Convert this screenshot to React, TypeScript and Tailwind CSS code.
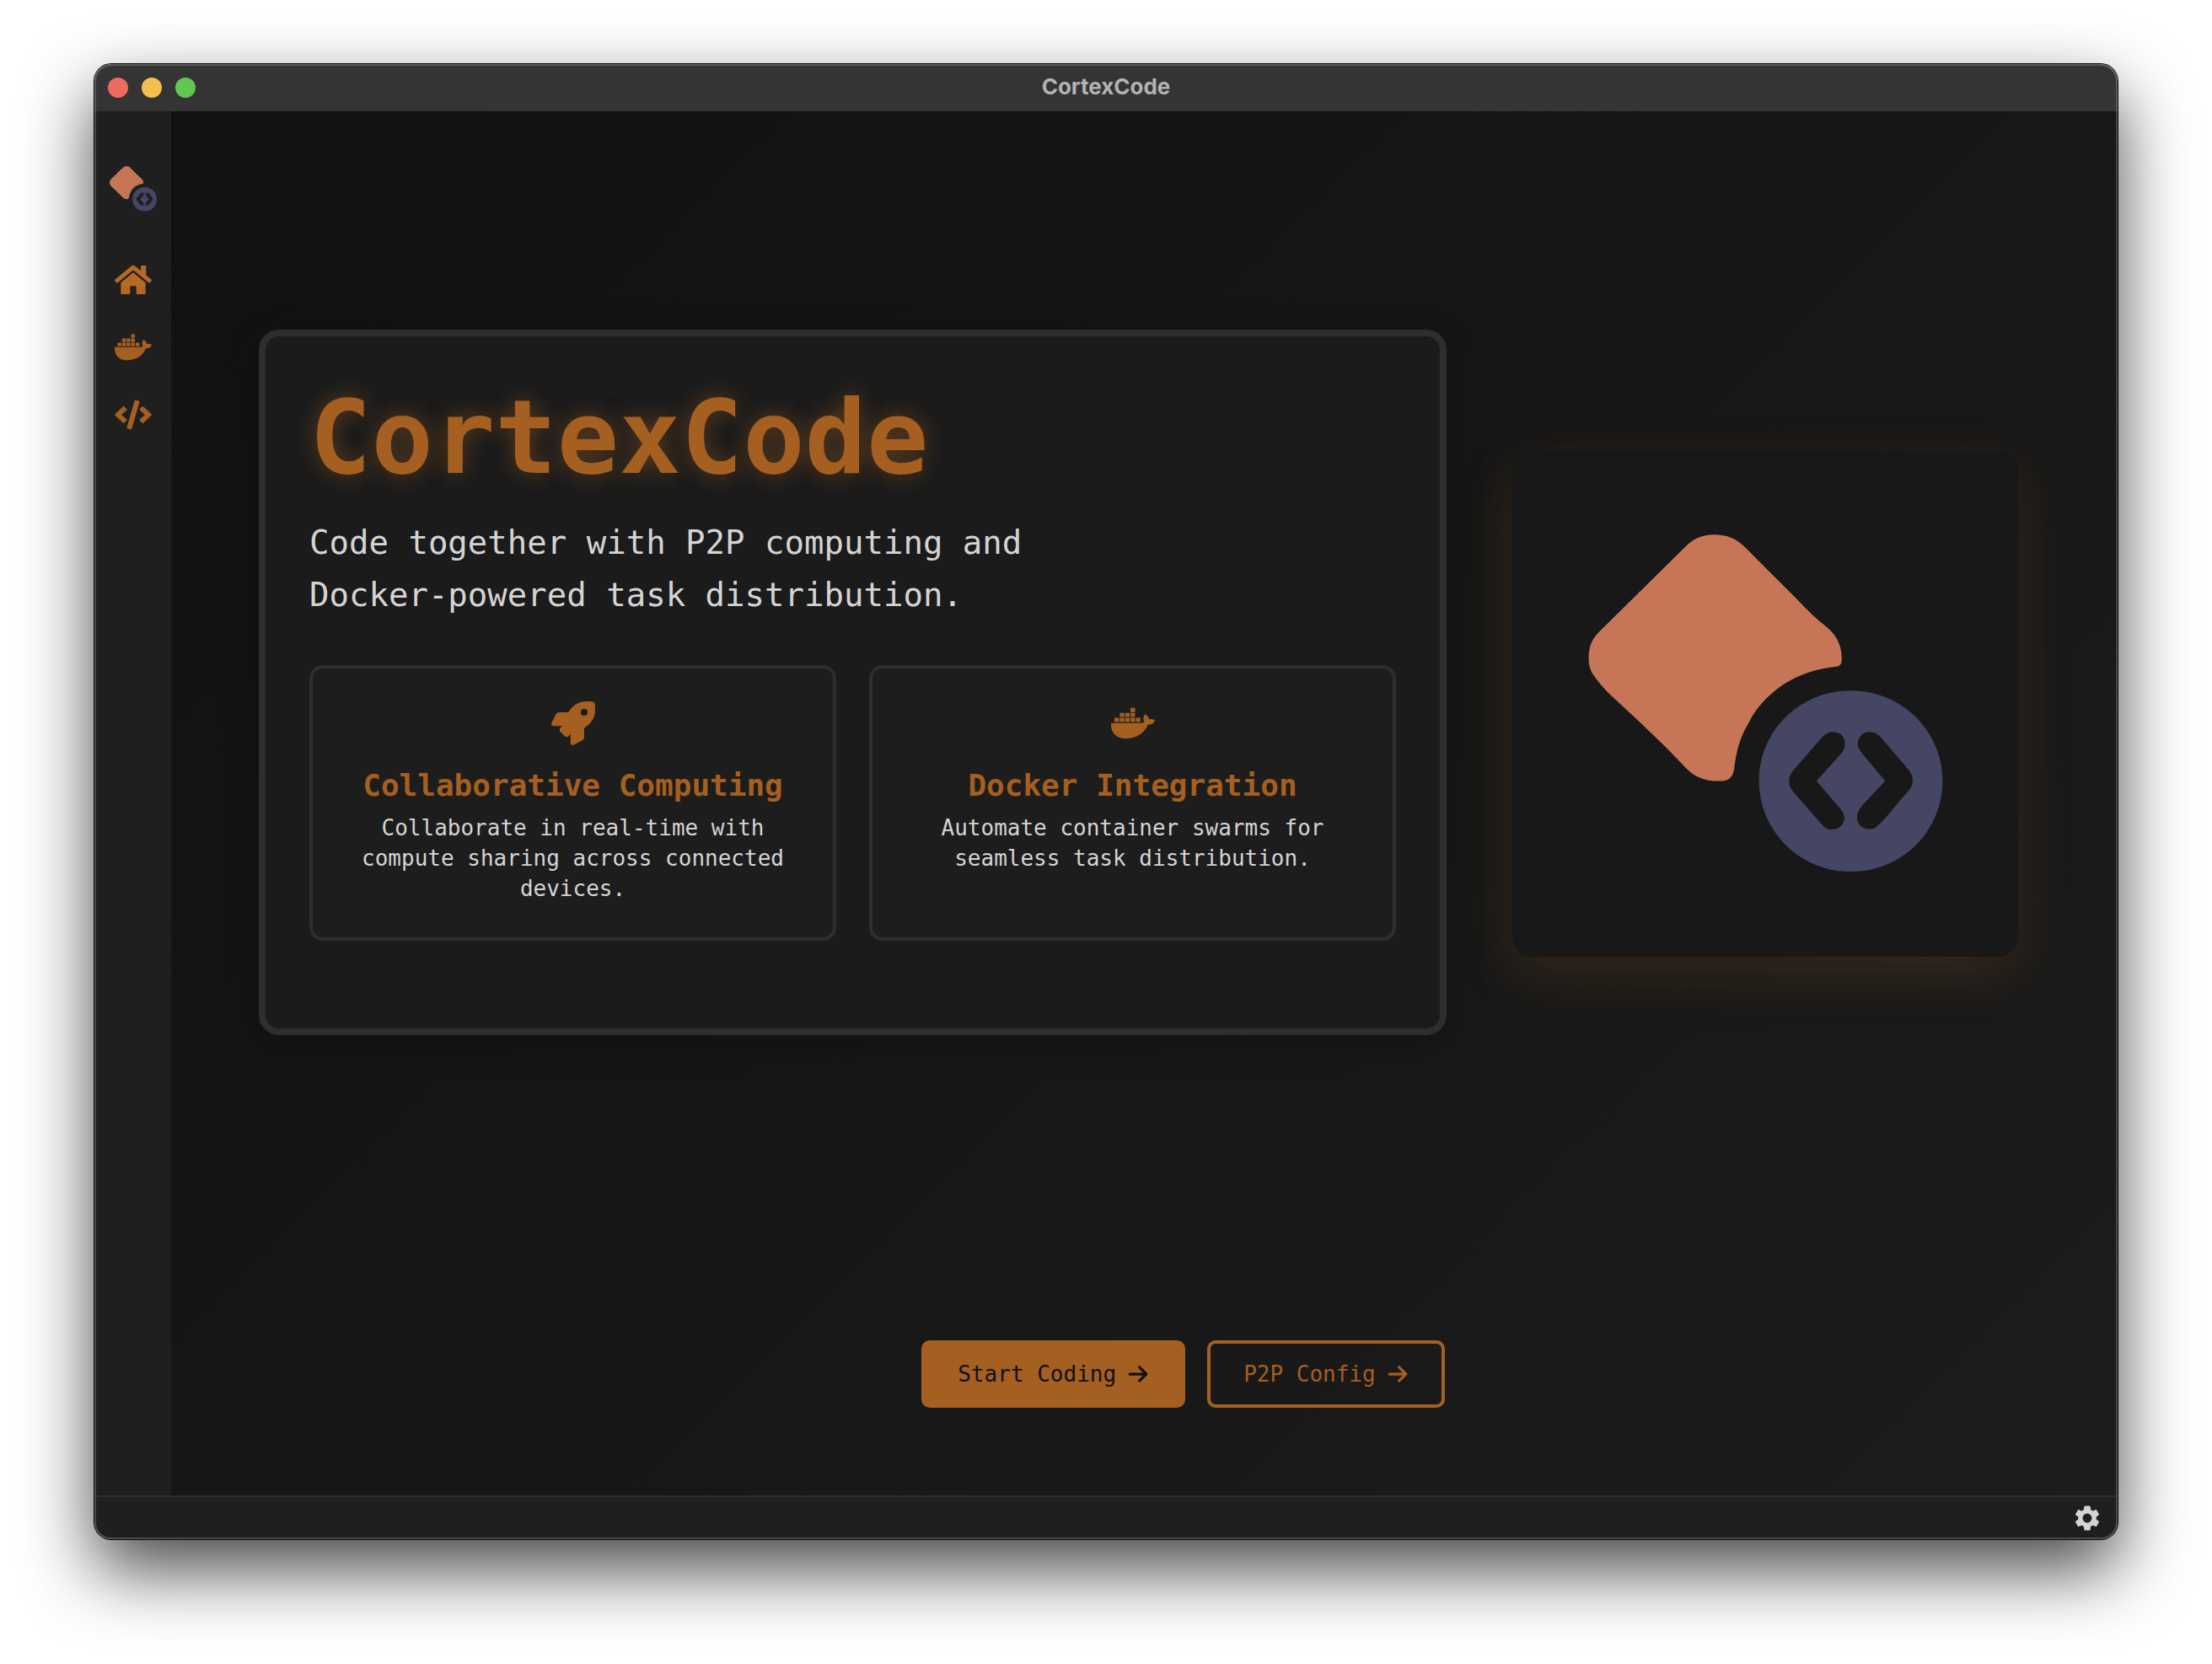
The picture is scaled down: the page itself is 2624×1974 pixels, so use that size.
import React from "react";
import { FaCode, FaDocker, FaHome, FaRocket } from "react-icons/fa";
import { FaArrowRight } from "react-icons/fa6";
import { MdSettings } from "react-icons/md";

function Logo({ className }: { className: string }) {
  return (
    <svg viewBox="0 0 600 600" className={className} role="img" aria-label="CortexCode logo">
      <path
        fill="#c67657"
        d="M239.400 99.200C227 99.200 216 103 206.900 112L103 214.400C94 223 90.600 233 90.600 245.200C90.600 253 92 260 96.300 265.800C101 273 108 281 115.800 288.800L150.500 320.900L183 352.200L204.700 374.700C214 385 226 391.600 242.400 391.600H248C256 391.600 261 387 262.400 380.600C263.800 376 263.500 372 264.500 367.800C267 351 272 336 280.600 322.300C287 309 296 298 306.600 288.800C317 279 330 271 343.500 265.800C357 260 370 257.500 384.600 255.700C389 255 391 252 390.700 247C391 236 388 227 382.500 219C376.500 210.500 368 205.500 360.800 198.800C352 190.500 344 182.500 336.900 174.900L300 138.200L276.200 114.300C266 104 255 99.200 239.400 99.200Z"
      />
      <path
        fill="#444663"
        fillRule="evenodd"
        d="M401.500 284.200C463 284.200 510.400 333 510.400 391.600C510.400 451 462 499.100 401.500 499.100C341 499.100 292.700 451 292.700 391.600C292.700 332 341 284.200 401.500 284.200ZM380.300 333.300C375 333.300 371 336 367.300 339.800L332.600 379.700C329.500 383.500 328.300 387.500 328.300 391.600C328.300 396 329.500 400 332.600 403.600L356.500 431.100C361 436 365 441 369.500 445.400C372.500 448 375.500 449 379 449C387 449 393.800 443.500 393.800 435.700C393.800 431 392 427.500 389 424.200L360.800 391.600L391.200 357.700C393.700 354 394.600 350.500 394.600 346.200C394.600 338.500 388 333.300 380.300 333.300ZM424.100 333.300C416 333.300 409.800 339.500 409.800 347.100C409.800 351.500 411.500 354.500 414.100 357.700L442.300 391.600L415 420.600C411 425.500 408.900 430 408.900 435.700C408.900 443 415.500 448.600 423.700 448.600C427 448.600 429.800 447.500 432.400 445.400C436.500 442 440 438.500 443.200 434.800L458.400 416.400L471.400 401.300C473.800 398 474.900 395 474.900 391.600C474.900 387.500 473.800 383.500 471.400 379.700L436.700 339.300C433 335.500 429 333.300 424.100 333.300Z"
      />
    </svg>
  );
}

function TitleBar() {
  return (
    <header className="grid h-14 shrink-0 grid-cols-3 items-center bg-[#343434] px-4">
      <div className="flex gap-4">
        <button aria-label="Close" className="size-6 rounded-full bg-[#ed6a5f]" />
        <button aria-label="Minimize" className="size-6 rounded-full bg-[#f5bf4f]" />
        <button aria-label="Zoom" className="size-6 rounded-full bg-[#62c655]" />
      </div>
      <div className="pb-0.5 text-center font-[Inter,sans-serif] text-[26px] leading-8 font-bold text-[#b3b3b3]">
        CortexCode
      </div>
    </header>
  );
}

function Sidebar() {
  return (
    <nav className="flex w-[91px] shrink-0 flex-col items-center bg-[#1f1f1f] pt-[52px] text-[44px] text-[#a55f20]">
      <Logo className="size-20" />
      <div className="mt-[46px] flex flex-col gap-9">
        <a href="#home" aria-label="Home" className="text-[#b56a24]">
          <FaHome />
        </a>
        <a href="#docker" aria-label="Docker">
          <FaDocker />
        </a>
        <a href="#code" aria-label="Code">
          <FaCode />
        </a>
      </div>
    </nav>
  );
}

function FeatureCard({ icon, title, text }: { icon: React.ReactNode; title: string; text: string }) {
  return (
    <article className="flex flex-1 flex-col items-center rounded-2xl border-4 border-[#2e2e2e] bg-[#1d1d1d] px-10 pt-[39px] pb-10 text-center">
      <div className="text-[52px] text-[#a55f20]">{icon}</div>
      <h2 className="mt-[26px] text-[36px] leading-11 font-bold whitespace-nowrap text-[#a55f20]">{title}</h2>
      <p className="mt-[10px] text-[26px] leading-9">{text}</p>
    </article>
  );
}

function Hero() {
  return (
    <section className="flex flex-1 items-center gap-[78px] pb-52">
      <div className="flex-1 rounded-3xl border-8 border-[#2e2e2e] bg-[#1b1b1b] p-[52px] shadow-[0_10px_40px_rgba(0,0,0,0.25)]">
        <h1 className="text-[122px] leading-[136px] font-bold text-[#a55f20] [text-shadow:0_0_26px_rgba(165,95,32,0.5)]">
          CortexCode
        </h1>
        <p className="mt-[26px] max-w-[936px] text-[39px] leading-[62px]">
          Code together with P2P computing and Docker-powered task distribution.
        </p>
        <div className="my-[52px] flex gap-[39px]">
          <FeatureCard
            icon={<FaRocket />}
            title="Collaborative Computing"
            text="Collaborate in real-time with compute sharing across connected devices."
          />
          <FeatureCard
            icon={<FaDocker />}
            title="Docker Integration"
            text="Automate container swarms for seamless task distribution."
          />
        </div>
      </div>
      <div className="mt-[52px] shrink-0 rounded-3xl bg-[#181818] shadow-[0_20px_64px_rgba(165,95,32,0.2)]">
        <Logo className="size-[600px]" />
      </div>
    </section>
  );
}

function Actions() {
  return (
    <div className="flex justify-center gap-[26px] pl-[106px] text-[26px] leading-9">
      <button className="flex h-20 items-center gap-[13px] rounded-[10px] border-4 border-[#a55f20] bg-[#a55f20] px-[39px] text-[#111111]">
        Start Coding <FaArrowRight />
      </button>
      <button className="flex h-20 items-center gap-[13px] rounded-[10px] border-4 border-[#a55f20] px-[39px] text-[#a55f20]">
        P2P Config <FaArrowRight />
      </button>
    </div>
  );
}

export default function App() {
  return (
    <div className="flex min-h-screen bg-white px-28 pt-[76px] pb-[148px] font-['DejaVu_Sans_Mono',monospace] text-[#d4d4d4]">
      <div className="relative flex flex-1 flex-col overflow-hidden rounded-[20px] shadow-[0_0_0_1px_#0a0a0a,0_36px_84px_rgba(0,0,0,0.72)] after:pointer-events-none after:absolute after:inset-0 after:rounded-[20px] after:border-2 after:border-white/20">
        <TitleBar />
        <div className="flex flex-1">
          <Sidebar />
          <main className="flex flex-1 flex-col bg-linear-135 from-[#111111] to-[#1c1c1c] py-[104px] pr-[118px] pl-[104px]">
            <Hero />
            <Actions />
          </main>
        </div>
        <footer className="flex h-[52px] shrink-0 items-center justify-end border-t-2 border-[#2e2e2e] bg-[#1f1f1f] px-[18px]">
          <button aria-label="Settings" className="text-[36px]">
            <MdSettings />
          </button>
        </footer>
      </div>
    </div>
  );
}
